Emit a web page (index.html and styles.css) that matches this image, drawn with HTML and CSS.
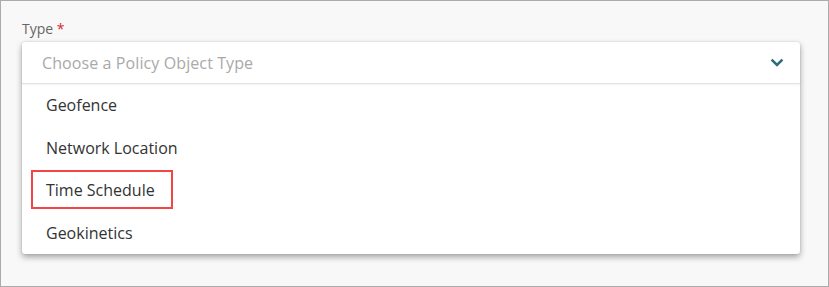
FILE: index.html
```html
<!DOCTYPE html>
<html>
<head>
<meta charset="utf-8">
<link rel="stylesheet" href="styles.css">
</head>
<body>
<div class="frame">
  <div class="label">Type <span class="req">*</span></div>
  <div class="dropdown">
    <div class="select">
      <span class="placeholder">Choose a Policy Object Type</span>
      <svg class="chev" width="14" height="9" viewBox="0 0 14 9"><path d="M1.6 1.6 L7 7 L12.4 1.6" fill="none" stroke="#2e6e79" stroke-width="2.6"/></svg>
    </div>
    <ul class="list">
      <li class="item">Geofence</li>
      <li class="item">Network Location</li>
      <li class="item hlitem"><span class="hl">Time Schedule</span></li>
      <li class="item">Geokinetics</li>
    </ul>
  </div>
</div>
</body>
</html>
```
FILE: styles.css
```css
html, body { margin: 0; padding: 0; }
body { width: 829px; height: 287px; font-family: "Open Sans", "Noto Sans", sans-serif; }
.frame {
  box-sizing: border-box;
  width: 829px; height: 287px;
  border: 1px solid #ababab;
  background: #f8f8f8;
  padding: 18px 28px 0 21px;
}
.label { font-size: 14px; color: #666; line-height: 20px; height: 23px; }
.req { color: #d9262c; }
.dropdown {
  background: #fff;
  border-radius: 3px;
  box-shadow: 0 3px 6px rgba(0,0,0,0.35), 0 0 2px rgba(0,0,0,0.12);
}
.select {
  height: 41px;
  display: flex; align-items: center; justify-content: space-between;
  padding: 0 16px 0 20px;
  border-bottom: 1px solid #e3e3e3;
  box-shadow: 0 1px 2px rgba(0,0,0,0.06);
}
.placeholder { font-size: 16px; letter-spacing: 0.1px; color: #a9a9a9; }
.chev { display: block; }
.list { list-style: none; margin: 0; padding: 0; }
.item {
  height: 42.5px;
  display: flex; align-items: center;
  padding-left: 24px;
  font-size: 16px; color: #333;
}
.hlitem { padding-left: 9px; }
.hl {
  border: 2px solid #f44545;
  line-height: 22px;
  padding: 7px 16px 6px 13px;
  margin-top: -1px;
}
```
